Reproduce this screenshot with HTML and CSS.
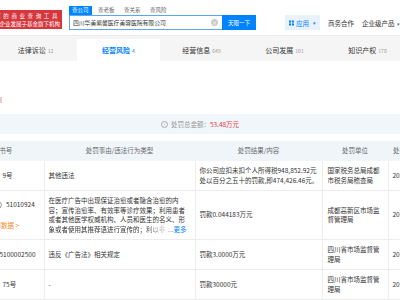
FILE: index.html
```html
<!DOCTYPE html>
<html lang="zh-CN">

<head>
    <meta charset="UTF-8">
    <meta name="viewport" content="width=device-width, initial-scale=1.0">
    <title>经营风险 - 行政处罚</title>
    <link rel="stylesheet" href="styles.css">
</head>

<body>
    <!-- 顶部搜索栏 -->
    <header class="topbar">
        <div class="logo">
            <p class="logo-l1">国家认可的商业查询工具</p>
            <p class="logo-l2">国家中小企业发展子基金旗下机构</p>
        </div>
        <div class="search">
            <div class="search-tabs">
                <span class="on">查公司</span>
                <span>查老板</span>
                <span>查关系</span>
                <span>查风险</span>
            </div>
            <div class="search-row">
                <div class="search-input">
                    四川华美紫馨医疗美容医院有限公司
                    <i class="clear">×</i>
                </div>
                <button class="search-btn">天眼一下</button>
            </div>
        </div>
        <nav class="top-links">
            <a class="app">
                <svg width="6" height="6" viewBox="0 0 6 6">
                    <rect x="0" y="0" width="2.5" height="2.5" fill="#0084ff"/>
                    <rect x="3.5" y="0" width="2.5" height="2.5" fill="#0084ff"/>
                    <rect x="0" y="3.5" width="2.5" height="2.5" fill="#0084ff"/>
                    <rect x="3.5" y="3.5" width="2.5" height="2.5" fill="#0084ff"/>
                </svg>
                应用<b class="caret">▾</b>
            </a>
            <a class="link">商务合作</a>
            <a class="link">企业级产品<b class="caret gray">▾</b></a>
        </nav>
    </header>

    <!-- 分类标签 -->
    <div class="tabs">
        <div class="tab">法律诉讼<em>12</em></div>
        <div class="tab active">经营风险<em>4</em></div>
        <div class="tab">经营信息<em>649</em></div>
        <div class="tab">公司发展<em>101</em></div>
        <div class="tab">知识产权<em>170</em></div>
    </div>

    <section class="panel">
        <div class="mark"></div>
        <div class="summary">
            <i class="info">!</i>
            处罚总金额：<span class="money">53.48万元</span>
        </div>

        <table class="punish">
            <colgroup>
                <col class="c1">
                <col class="c2">
                <col class="c3">
                <col class="c4">
                <col class="c5">
            </colgroup>
            <thead>
                <tr>
                    <th class="first">决定文书号</th>
                    <th>处罚事由/违法行为类型</th>
                    <th>处罚结果/内容</th>
                    <th>处罚单位</th>
                    <th class="left">处罚日期</th>
                </tr>
            </thead>
            <tbody>
                <tr>
                    <td>川税稽罚〔2019〕9号</td>
                    <td>其他违法</td>
                    <td>你公司应扣未扣个人所得税948,852.92元处以百分之五十的罚款,即474,426.46元。</td>
                    <td>国家税务总局成都市税务局稽查局</td>
                    <td>2019-03-20</td>
                </tr>
                <tr>
                    <td>
                        <p class="indent">高市监罚（2019）51010924</p>
                        <p class="more-data">查看更多同类处罚数据 &gt;</p>
                    </td>
                    <td>
                        <p>在医疗广告中出现保证治愈或者隐含治愈的内容；宣传治愈率、有效率等诊疗效果；利用患者或者其他医学权威机构、人员和医生的名义、形</p>
                        <p class="last-line">
                            <span class="cut">象或者使用其推荐语进行宣传的；利以非</span>
                            <span class="more">...<a>更多</a></span>
                        </p>
                    </td>
                    <td>罚款0.044183万元</td>
                    <td>成都高新区市场监督管理局</td>
                    <td>2019-07-30</td>
                </tr>
                <tr>
                    <td class="indent">市监罚〔2019〕5100002500</td>
                    <td>违反《广告法》相关规定</td>
                    <td>罚款3.0000万元</td>
                    <td>四川省市场监督管理局</td>
                    <td>2019-11-05</td>
                </tr>
                <tr>
                    <td>川市监罚〔2018〕75号</td>
                    <td>-</td>
                    <td>罚款30000元</td>
                    <td>四川省市场监督管理局</td>
                    <td>2018-06-12</td>
                </tr>
            </tbody>
        </table>
    </section>
</body>

</html>
```

FILE: styles.css
```css
body {
    margin: 0;
    width: 400px;
    height: 300px;
    overflow: hidden;
    background: #fff;
    color: #333;
    font-family: "Noto Sans CJK SC", "Noto Sans", sans-serif;
}

p {
    margin: 0;
    padding: 0;
}

a {
    cursor: pointer;
}

/* 顶部 */
.topbar {
    display: flex;
    align-items: flex-start;
    height: 35px;
    background: #fff;
}

.logo {
    flex: none;
    width: 92px;
    height: 19px;
    margin: 10px 0 0 -30px;
    padding: 2px 2px 0 0;
    box-sizing: border-box;
    background: #d6363d;
    color: #fff;
    font-size: 5.5px;
    line-height: 8px;
    text-align: right;
    white-space: nowrap;
    overflow: hidden;
}

.logo-l1 {
    letter-spacing: 2.6px;
}

.search {
    flex: none;
    width: 187px;
    margin: 6px 0 0 7px;
}

.search-tabs {
    display: flex;
    height: 9px;
    font-size: 5.5px;
    line-height: 9px;
}

.search-tabs span {
    padding: 0 3px;
    margin-right: 3.5px;
    color: #666;
}

.search-tabs .on {
    background: #0084ff;
    color: #fff;
}

.search-row {
    display: flex;
    height: 15px;
}

.search-input {
    flex: 1;
    display: flex;
    align-items: center;
    padding: 0 4px 0 3px;
    border: 1px solid #5aa6f2;
    border-right: 0;
    font-size: 5.8px;
    color: #333;
    white-space: nowrap;
}

.clear {
    width: 7px;
    height: 7px;
    margin-left: auto;
    border-radius: 50%;
    background: #c9c9c9;
    color: #fff;
    font-style: normal;
    font-size: 6px;
    line-height: 7px;
    text-align: center;
}

.search-btn {
    width: 34px;
    padding: 0;
    border: 0;
    background: #0084ff;
    color: #fff;
    font-family: inherit;
    font-size: 5.5px;
}

.top-links {
    display: flex;
    align-items: center;
    height: 15px;
    margin: 15px 0 0 29px;
    font-size: 6.5px;
    white-space: nowrap;
}

.app {
    display: flex;
    align-items: center;
    gap: 2px;
    width: 35px;
    height: 15px;
    padding: 0 4px;
    box-sizing: border-box;
    background: #e9f2fc;
    color: #0084ff;
}

.link {
    margin-left: 8px;
    color: #333;
}

.caret {
    margin-left: 2px;
    font-weight: normal;
    font-size: 5px;
}

.caret.gray {
    color: #666;
}

/* 标签栏 */
.tabs {
    display: flex;
    margin-left: -6px;
    padding-top: 3px;
    background: #f5f5f5;
    border-top: 1px solid #ececec;
}

.tab {
    flex: none;
    width: 83px;
    height: 22px;
    font-size: 7px;
    line-height: 22px;
    text-align: center;
    color: #333;
}

.tab em {
    margin-left: 2px;
    font-style: normal;
    font-size: 5px;
    color: #999;
}

.tab.active {
    background: #fff;
    color: #0084ff;
    font-weight: bold;
}

.tab.active em {
    color: #0084ff;
    font-weight: normal;
}

/* 内容 */
.mark {
    width: 2px;
    height: 6px;
    margin-top: 36px;
    background: #efc9cc;
}

.summary {
    display: flex;
    align-items: center;
    justify-content: center;
    height: 20px;
    margin-top: 11px;
    background: #f1f6fb;
    font-size: 6.5px;
    color: #999;
}

.info {
    width: 5px;
    height: 5px;
    margin-right: 3px;
    border: 0.7px solid #aaa;
    border-radius: 50%;
    font-style: normal;
    font-size: 4px;
    line-height: 5px;
    text-align: center;
    color: #aaa;
}

.money {
    color: #e4393c;
}

.punish {
    width: 504px;
    margin: 7px 0 0 -56px;
    table-layout: fixed;
    border-collapse: collapse;
    font-size: 6.5px;
    line-height: 9.5px;
}

.c1 {
    width: 100px;
}

.c2 {
    width: 151px;
}

.c3 {
    width: 127px;
}

.c4 {
    width: 66px;
}

.c5 {
    width: 60px;
}

.punish th {
    height: 20px;
    padding: 0;
    background: #f0f5fa;
    font-weight: normal;
    color: #666;
    text-align: center;
}

.punish th.first {
    padding-left: 4px;
}

.punish th.left {
    padding-left: 5px;
    text-align: left;
}

.punish td {
    padding: 5px 3px 5px 4px;
    border-bottom: 1px solid #ececec;
    border-right: 1px solid #ececec;
    vertical-align: middle;
    color: #333;
}

.punish td:first-child {
    padding-left: 5px;
    white-space: nowrap;
}

.punish td:nth-child(2) {
    padding-right: 8px;
}

.punish td:nth-child(4) {
    padding: 5px 5px;
}

.punish .indent {
    text-indent: 3.5px;
}

.more-data {
    margin-top: 11px;
    color: #f08a24;
}

.last-line {
    display: flex;
    white-space: nowrap;
}

.cut {
    flex: 1;
    min-width: 0;
    -webkit-mask-image: linear-gradient(to right, #000 80%, rgba(0, 0, 0, 0.15));
    mask-image: linear-gradient(to right, #000 80%, rgba(0, 0, 0, 0.15));
}

.more {
    flex: none;
    margin-left: 1px;
    color: #999;
}

.more a {
    color: #0084ff;
}
```
